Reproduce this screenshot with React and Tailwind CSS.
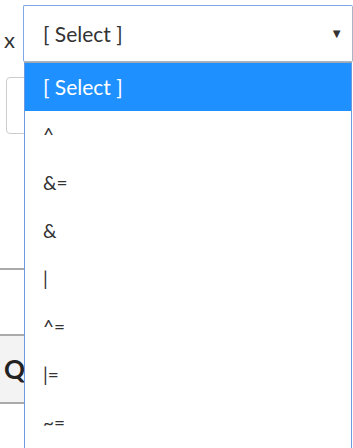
import React from 'react';

const options = ['^', '&=', '&', '|', '^=', '|=', '~='];

export default function App() {
  return (
    <div className="relative w-[353px] h-[448px] overflow-hidden bg-white text-[#333] font-['Lato','Liberation_Sans',sans-serif]">
      {/* --- select row --- */}
      <div className="flex items-center pt-[5px]">
        <span className="w-[23px] pl-[4px] pt-[12px] text-[22px] leading-none text-[#333]">x</span>
        <div className="flex-1 h-[57px] flex items-center justify-between pl-[19px] pr-[9px] bg-white border border-[#7fa6e8] border-b-[#a9b4c4] border-r-[#a9b4c4] rounded-[2px]">
          <span className="text-[21px]">[ Select ]</span>
          <span className="text-[13px] text-[#333]">▼</span>
        </div>
      </div>

      {/* --- form content behind the list --- */}
      <div className="mt-[15px] ml-[6px] h-[57px] w-[200px] border border-[#cccccc] rounded-[4px]" />
      <div className="mt-[134px] h-[2px] w-[40px] bg-[#aaaaaa]" />
      <div className="mt-[64px] h-[70px] w-[120px] bg-[#f3f3f3] border-t-2 border-b-2 border-[#aaaaaa] flex items-center pl-[4px]">
        <span className="text-[26px] font-bold text-[#222]">Q</span>
      </div>

      {/* --- open dropdown list --- */}
      <ul className="absolute left-[24px] right-[1px] top-[62px] bottom-0 bg-white border-x border-[#6d9ae0] border-t border-t-[#a0a8b4]">
        <li className="h-[48px] flex items-center pl-[18px] bg-[#1e90ff] text-white text-[21px]">[ Select ]</li>
        {options.map((o) => (
          <li key={o} className="h-[48px] flex items-center pl-[18px] text-[19px] text-[#333]">
            {o}
          </li>
        ))}
      </ul>
    </div>
  );
}
